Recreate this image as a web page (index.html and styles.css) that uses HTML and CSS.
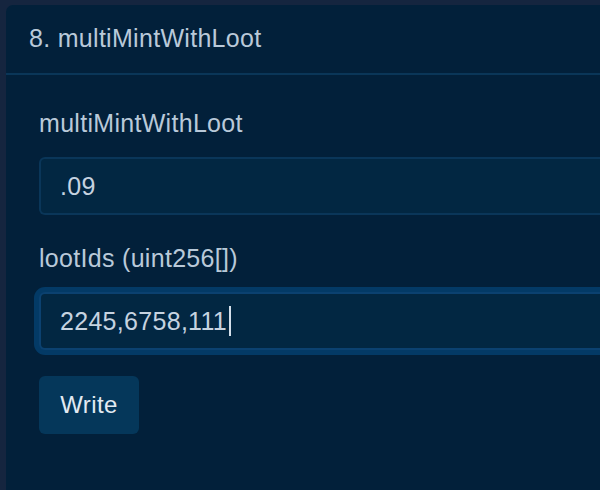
FILE: index.html
```html
<!DOCTYPE html>
<html lang="en">
<head>
  <meta charset="UTF-8">
  <title>multiMintWithLoot</title>
  <link rel="stylesheet" href="styles.css">
</head>
<body>

  <div class="card">
    <div class="card-header">8. multiMintWithLoot</div>

    <form class="card-body">
      <label class="field-label">multiMintWithLoot</label>
      <div class="field">.09</div>

      <label class="field-label">lootIds (uint256[])</label>
      <div class="field focused">2245,6758,111<span class="caret"></span></div>

      <button type="button" class="btn-write">Write</button>
    </form>
  </div>

</body>
</html>
```

FILE: styles.css
```css
body {
  margin: 0;
  padding: 5px 0 0 6px;
  background-color: #15253f;
  font-family: 'Liberation Sans', Arial, sans-serif;
  overflow: hidden;
  height: 485px;
}

/* the card is cut off by the right edge of the window */
.card {
  height: 100%;
  background-color: #02203a;
  border-radius: 7px 0 0 0;
}

.card-header {
  padding: 15px 23px 17px;
  font-size: 25px;
  line-height: 36px;
  letter-spacing: 0.3px;
  color: #b9c9d9;
  border-bottom: 2px solid #0a3658;
}

.card-body {
  display: flex;
  flex-direction: column;
  align-items: flex-start;
  padding: 30px 0 30px 33px;
}

.field-label {
  font-size: 25px;
  line-height: 36px;
  letter-spacing: 0.3px;
  color: #b9c9d9;
  margin-bottom: 16px;
}

.field {
  box-sizing: border-box;
  width: 100%;
  height: 58px;
  padding: 0 19px;
  display: flex;
  align-items: center;
  font-size: 25px;
  letter-spacing: 0.3px;
  color: #c6d3e0;
  background-color: #022742;
  border: 2px solid #0a3659;
  border-right: none;
  border-radius: 6px 0 0 6px;
  margin-bottom: 25px;
}

.field.focused {
  border-color: #0b4170;
  box-shadow: 0 0 0 5px #033a66;
}

.caret {
  display: inline-block;
  width: 2px;
  height: 30px;
  margin-left: 2px;
  background-color: #d4dfea;
}

.btn-write {
  margin-top: 1px;
  width: 100px;
  height: 58px;
  font-family: inherit;
  font-size: 24px;
  letter-spacing: 0.4px;
  color: #e2eaf2;
  background-color: #05375a;
  border: none;
  border-radius: 6px;
  cursor: pointer;
}
```
